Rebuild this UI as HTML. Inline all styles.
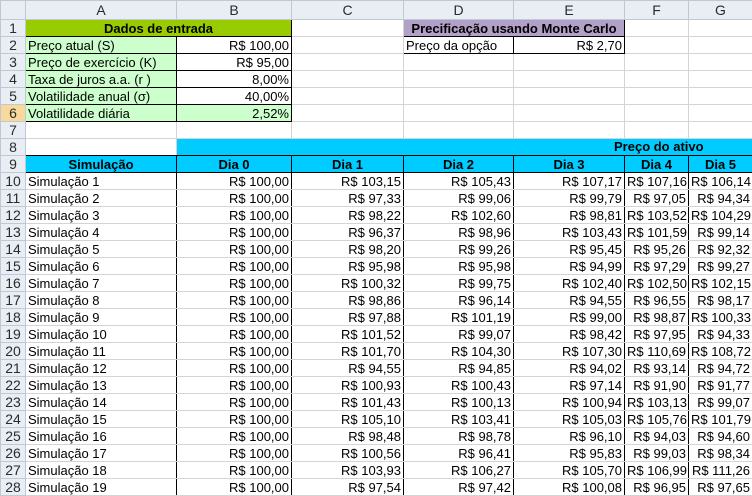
<!DOCTYPE html>
<html><head><meta charset="utf-8"><style>
body{margin:0;background:#fff;width:752px;height:494px;overflow:hidden;position:relative;font-family:"Liberation Sans",Arial,sans-serif;font-size:13px;color:#000}
table{border-collapse:collapse;table-layout:fixed;position:absolute;left:0;top:0;width:752px}
td{box-sizing:border-box;height:17px;padding:0 2px;border:1px solid #d4d4d4;white-space:nowrap;overflow:hidden;line-height:15px}
tr.h td{height:19px;background:#e9eef5;color:#2b2b2b;text-align:center;border-color:#c0c8d4;font-size:14px}
td.rh{background:#e9eef5;color:#2b2b2b;text-align:center;border-color:#c0c8d4;padding:0;font-size:14px}
td.sel{background:#f9d99a}
.g{background:#99cc00;font-weight:bold;text-align:center;border:1px solid #000}
.lg{background:#ccffcc;border:1px solid #000}
.w{border:1px solid #000}
.r{text-align:right}
.p{background:#b1a0c7;font-weight:bold;text-align:center;border:1px solid #000}
.c{background:#00ccff;font-weight:bold;text-align:center;border:1px solid #000}
.c8{background:#00ccff;border-top:1px solid #000;border-bottom:1px solid #000;border-left:none;border-right:none}
.c8l{background:#00ccff;border-top:1px solid #000;border-bottom:1px solid #000;border-left:1px solid #000;border-right:none}
.d{border-left:1px solid #000;border-right:1px solid #000;text-align:right}
.da{border-left:1px solid #000;border-right:1px solid #000}
</style></head><body>
<table>
<colgroup><col style="width:25px"><col style="width:151px"><col style="width:115px"><col style="width:112px"><col style="width:110px"><col style="width:111px"><col style="width:64px"><col style="width:64px"></colgroup>
<tr class="h"><td style="width:25px"></td><td style="width:151px">A</td><td style="width:115px">B</td><td style="width:112px">C</td><td style="width:110px">D</td><td style="width:111px">E</td><td style="width:64px">F</td><td style="width:64px">G</td></tr>
<tr><td class="rh">1</td><td class="g" colspan="2">Dados de entrada</td><td></td><td class="p" colspan="2">Precificação usando Monte Carlo</td><td></td><td></td></tr>
<tr><td class="rh">2</td><td class="lg">Preço atual (S)</td><td class="w r">R$ 100,00</td><td></td><td class="w">Preço da opção</td><td class="w r">R$ 2,70</td><td></td><td></td></tr>
<tr><td class="rh">3</td><td class="lg">Preço de exercício (K)</td><td class="w r">R$ 95,00</td><td></td><td></td><td></td><td></td><td></td></tr>
<tr><td class="rh">4</td><td class="lg">Taxa de juros a.a. (r )</td><td class="w r">8,00%</td><td></td><td></td><td></td><td></td><td></td></tr>
<tr><td class="rh">5</td><td class="lg">Volatilidade anual (σ)</td><td class="w r">40,00%</td><td></td><td></td><td></td><td></td><td></td></tr>
<tr><td class="rh sel">6</td><td class="lg">Volatilidade diária</td><td class="lg r">2,52%</td><td></td><td></td><td></td><td></td><td></td></tr>
<tr><td class="rh">7</td><td></td><td></td><td></td><td></td><td></td><td></td><td></td></tr>
<tr><td class="rh">8</td><td style="border-bottom:1px solid #000"></td><td class="c8l"></td><td class="c8"></td><td class="c8"></td><td class="c8"></td><td class="c8"></td><td class="c8"></td></tr>
<tr><td class="rh">9</td><td class="c">Simulação</td><td class="c">Dia 0</td><td class="c">Dia 1</td><td class="c">Dia 2</td><td class="c">Dia 3</td><td class="c">Dia 4</td><td class="c">Dia 5</td></tr>
<tr><td class="rh">10</td><td class="da">Simulação 1</td><td class="d">R$ 100,00</td><td class="d">R$ 103,15</td><td class="d">R$ 105,43</td><td class="d">R$ 107,17</td><td class="d">R$ 107,16</td><td class="d">R$ 106,14</td></tr>
<tr><td class="rh">11</td><td class="da">Simulação 2</td><td class="d">R$ 100,00</td><td class="d">R$ 97,33</td><td class="d">R$ 99,06</td><td class="d">R$ 99,79</td><td class="d">R$ 97,05</td><td class="d">R$ 94,34</td></tr>
<tr><td class="rh">12</td><td class="da">Simulação 3</td><td class="d">R$ 100,00</td><td class="d">R$ 98,22</td><td class="d">R$ 102,60</td><td class="d">R$ 98,81</td><td class="d">R$ 103,52</td><td class="d">R$ 104,29</td></tr>
<tr><td class="rh">13</td><td class="da">Simulação 4</td><td class="d">R$ 100,00</td><td class="d">R$ 96,37</td><td class="d">R$ 98,96</td><td class="d">R$ 103,43</td><td class="d">R$ 101,59</td><td class="d">R$ 99,14</td></tr>
<tr><td class="rh">14</td><td class="da">Simulação 5</td><td class="d">R$ 100,00</td><td class="d">R$ 98,20</td><td class="d">R$ 99,26</td><td class="d">R$ 95,45</td><td class="d">R$ 95,26</td><td class="d">R$ 92,32</td></tr>
<tr><td class="rh">15</td><td class="da">Simulação 6</td><td class="d">R$ 100,00</td><td class="d">R$ 95,98</td><td class="d">R$ 95,98</td><td class="d">R$ 94,99</td><td class="d">R$ 97,29</td><td class="d">R$ 99,27</td></tr>
<tr><td class="rh">16</td><td class="da">Simulação 7</td><td class="d">R$ 100,00</td><td class="d">R$ 100,32</td><td class="d">R$ 99,75</td><td class="d">R$ 102,40</td><td class="d">R$ 102,50</td><td class="d">R$ 102,15</td></tr>
<tr><td class="rh">17</td><td class="da">Simulação 8</td><td class="d">R$ 100,00</td><td class="d">R$ 98,86</td><td class="d">R$ 96,14</td><td class="d">R$ 94,55</td><td class="d">R$ 96,55</td><td class="d">R$ 98,17</td></tr>
<tr><td class="rh">18</td><td class="da">Simulação 9</td><td class="d">R$ 100,00</td><td class="d">R$ 97,88</td><td class="d">R$ 101,19</td><td class="d">R$ 99,00</td><td class="d">R$ 98,87</td><td class="d">R$ 100,33</td></tr>
<tr><td class="rh">19</td><td class="da">Simulação 10</td><td class="d">R$ 100,00</td><td class="d">R$ 101,52</td><td class="d">R$ 99,07</td><td class="d">R$ 98,42</td><td class="d">R$ 97,95</td><td class="d">R$ 94,33</td></tr>
<tr><td class="rh">20</td><td class="da">Simulação 11</td><td class="d">R$ 100,00</td><td class="d">R$ 101,70</td><td class="d">R$ 104,30</td><td class="d">R$ 107,30</td><td class="d">R$ 110,69</td><td class="d">R$ 108,72</td></tr>
<tr><td class="rh">21</td><td class="da">Simulação 12</td><td class="d">R$ 100,00</td><td class="d">R$ 94,55</td><td class="d">R$ 94,85</td><td class="d">R$ 94,02</td><td class="d">R$ 93,14</td><td class="d">R$ 94,72</td></tr>
<tr><td class="rh">22</td><td class="da">Simulação 13</td><td class="d">R$ 100,00</td><td class="d">R$ 100,93</td><td class="d">R$ 100,43</td><td class="d">R$ 97,14</td><td class="d">R$ 91,90</td><td class="d">R$ 91,77</td></tr>
<tr><td class="rh">23</td><td class="da">Simulação 14</td><td class="d">R$ 100,00</td><td class="d">R$ 101,43</td><td class="d">R$ 100,13</td><td class="d">R$ 100,94</td><td class="d">R$ 103,13</td><td class="d">R$ 99,07</td></tr>
<tr><td class="rh">24</td><td class="da">Simulação 15</td><td class="d">R$ 100,00</td><td class="d">R$ 105,10</td><td class="d">R$ 103,41</td><td class="d">R$ 105,03</td><td class="d">R$ 105,76</td><td class="d">R$ 101,79</td></tr>
<tr><td class="rh">25</td><td class="da">Simulação 16</td><td class="d">R$ 100,00</td><td class="d">R$ 98,48</td><td class="d">R$ 98,78</td><td class="d">R$ 96,10</td><td class="d">R$ 94,03</td><td class="d">R$ 94,60</td></tr>
<tr><td class="rh">26</td><td class="da">Simulação 17</td><td class="d">R$ 100,00</td><td class="d">R$ 100,56</td><td class="d">R$ 96,41</td><td class="d">R$ 95,83</td><td class="d">R$ 99,03</td><td class="d">R$ 98,34</td></tr>
<tr><td class="rh">27</td><td class="da">Simulação 18</td><td class="d">R$ 100,00</td><td class="d">R$ 103,93</td><td class="d">R$ 106,27</td><td class="d">R$ 105,70</td><td class="d">R$ 106,99</td><td class="d">R$ 111,26</td></tr>
<tr><td class="rh">28</td><td class="da">Simulação 19</td><td class="d">R$ 100,00</td><td class="d">R$ 97,54</td><td class="d">R$ 97,42</td><td class="d">R$ 100,08</td><td class="d">R$ 96,95</td><td class="d">R$ 97,65</td></tr>
</table>
<div style="position:absolute;left:614px;top:138px;height:17px;line-height:17px;font-weight:bold;white-space:nowrap">Preço do ativo</div>
</body></html>
